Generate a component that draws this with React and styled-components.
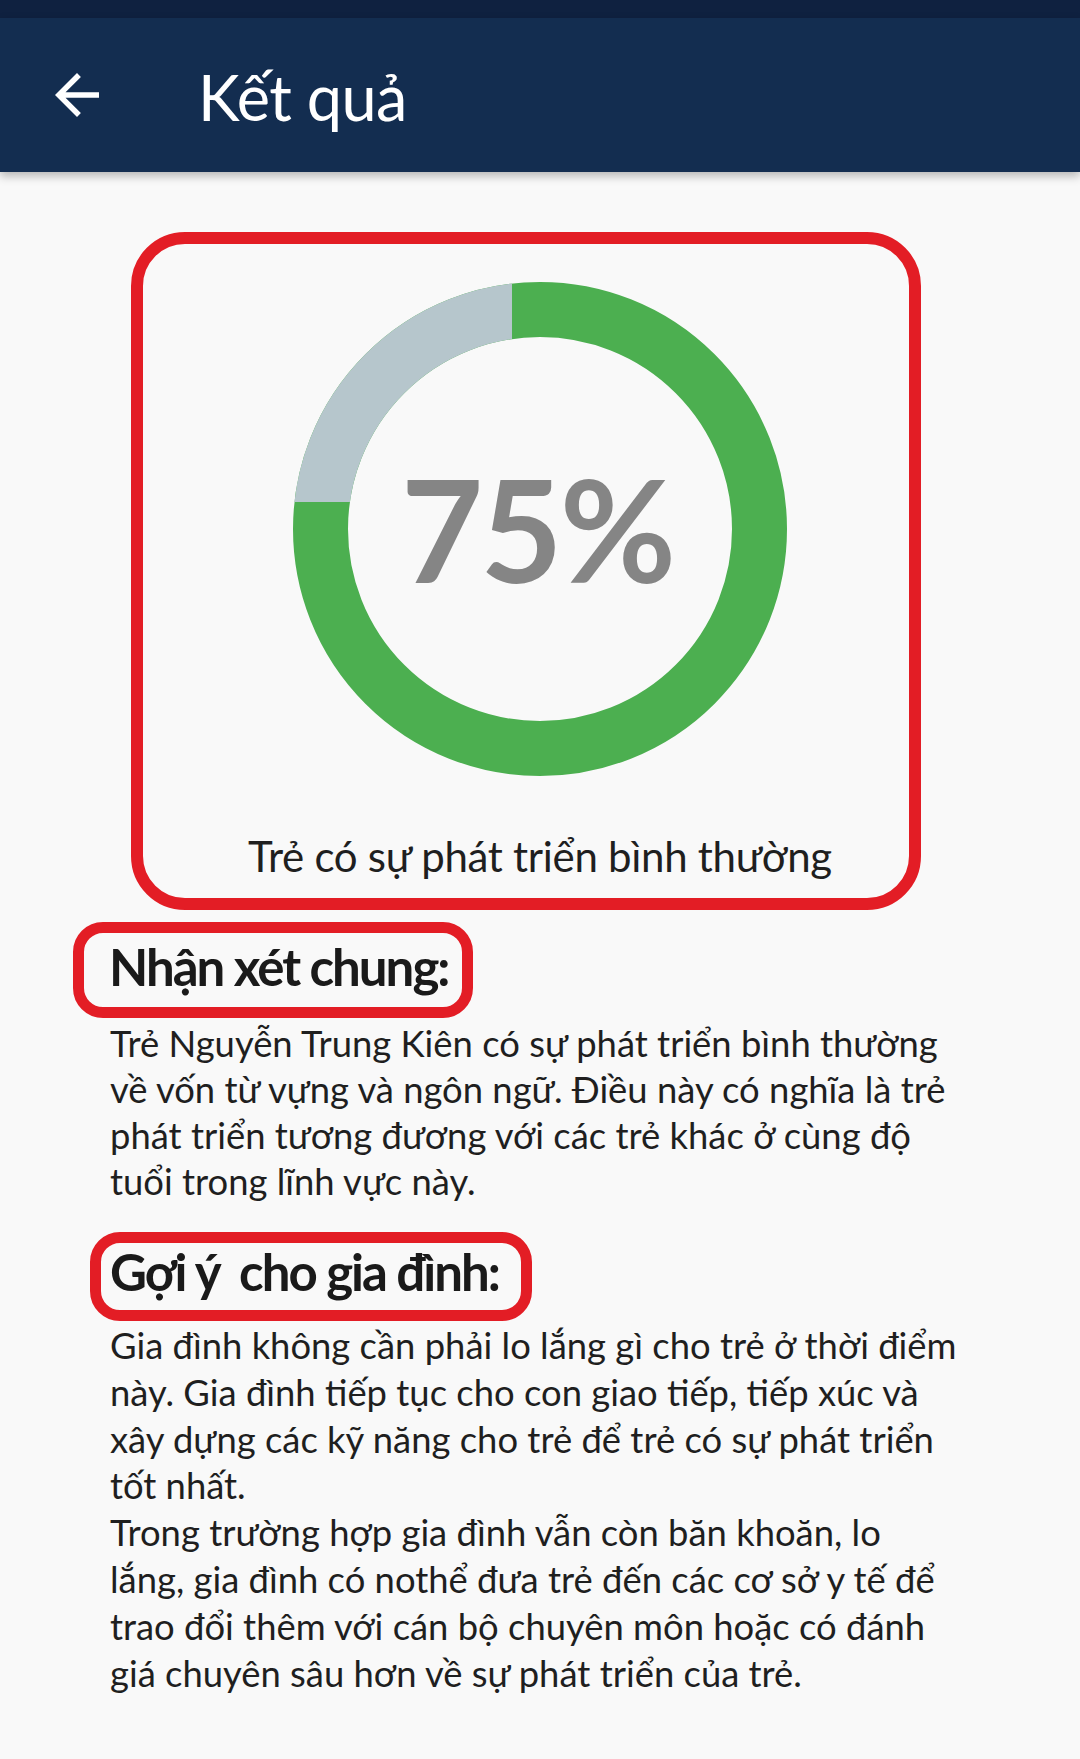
import React from 'react';
import styled, { createGlobalStyle } from 'styled-components';

const GlobalStyle = createGlobalStyle`
    html, body {
        margin: 0;
        padding: 0;
        background: #f9f9f9;
    }
    body {
        font-family: Lato, "Noto Sans", "Open Sans", sans-serif;
        color: #1f1f1f;
    }
`;

const Screen = styled.div`
    width: 1080px;
    min-height: 1759px;
    background: #f9f9f9;
    overflow: hidden;
`;

const StatusBar = styled.div`
    height: 18px;
    background: #0f2140;
`;

const TopBar = styled.header`
    height: 154px;
    background: #132d50;
    display: flex;
    align-items: center;
    padding-left: 44px;
    box-shadow: 0 4px 9px rgba(0, 0, 0, 0.28);
    position: relative;
    z-index: 1;

    svg {
        width: 66px;
        height: 66px;
        fill: #ffffff;
        flex-shrink: 0;
    }

    h1 {
        margin: 0 0 0 88px;
        font-size: 63px;
        font-weight: 400;
        color: #ffffff;
        letter-spacing: -0.6px;
        transform: translateY(1px);
    }
`;

const Content = styled.main`
    padding-top: 60px;
    padding-bottom: 40px;
`;

const ResultCard = styled.section`
    box-sizing: border-box;
    margin-left: 131px;
    width: 790px;
    height: 678px;
    border: 12px solid #e31d25;
    border-radius: 54px;
    padding: 38px 0 0 28px;
    display: flex;
    flex-direction: column;
    align-items: center;
`;

const Donut = styled.div`
    position: relative;
    width: 494px;
    height: 494px;

    svg {
        display: block;
    }
`;

const Percent = styled.span`
    position: absolute;
    inset: 0;
    display: flex;
    align-items: center;
    justify-content: center;
    font-size: 142px;
    font-weight: 700;
    color: #858585;
    letter-spacing: -3px;
    padding: 0 6px 2px 0;
`;

const Caption = styled.p`
    margin: 55px 0 0;
    font-size: 42px;
    line-height: 50px;
    color: #1f1f1f;
    letter-spacing: -0.3px;
`;

const HeadingBox = styled.div`
    box-sizing: border-box;
    margin: ${p => p.$top}px 0 0 ${p => p.$left}px;
    width: ${p => p.$width}px;
    height: ${p => p.$height}px;
    border: 11px solid #e31d25;
    border-radius: 30px;
    padding: ${p => p.$padTop}px 0 0 ${p => p.$padLeft}px;

    h2 {
        margin: 0;
        font-size: 51px;
        line-height: ${p => p.$lineHeight}px;
        font-weight: 700;
        letter-spacing: -2px;
        color: #1a1a1a;
        white-space: pre;
    }
`;

const Paragraph = styled.div`
    margin: ${p => p.$top}px 0 0 110px;
    font-size: 36.4px;
    line-height: ${p => p.$lineHeight}px;
    color: #1f1f1f;
`;

const Line = styled.span`
    display: block;
    white-space: nowrap;
`;

const R = 247;
const STROKE = 55;

const ProgressRing = ({ value }) => (
    <Donut>
        <svg width={R * 2} height={R * 2} viewBox={`0 0 ${R * 2} ${R * 2}`}>
            <defs>
                <clipPath id="rest-clip">
                    <rect x="0" y="0" width={R - 28} height={R - 27} />
                </clipPath>
            </defs>
            <circle cx={R} cy={R} r={R - STROKE / 2} fill="none" stroke="#4caf50" strokeWidth={STROKE} />
            <circle
                cx={R}
                cy={R}
                r={R - STROKE / 2}
                fill="none"
                stroke="#b6c6cc"
                strokeWidth={STROKE}
                clipPath="url(#rest-clip)"
            />
        </svg>
        <Percent>{value}%</Percent>
    </Donut>
);

const summary = [
    'Trẻ Nguyễn Trung Kiên có sự phát triển bình thường',
    'về vốn từ vựng và ngôn ngữ. Điều này có nghĩa là trẻ',
    'phát triển tương đương với các trẻ khác ở cùng độ',
    'tuổi trong lĩnh vực này.',
];

const advice = [
    'Gia đình không cần phải lo lắng gì cho trẻ ở thời điểm',
    'này. Gia đình tiếp tục cho con giao tiếp, tiếp xúc và',
    'xây dựng các kỹ năng cho trẻ để trẻ có sự phát triển',
    'tốt nhất.',
    'Trong trường hợp gia đình vẫn còn băn khoăn, lo',
    'lắng, gia đình có nothể đưa trẻ đến các cơ sở y tế để',
    'trao đổi thêm với cán bộ chuyên môn hoặc có đánh',
    'giá chuyên sâu hơn về sự phát triển của trẻ.',
];

const App = () => {
    return (
        <Screen>
            <GlobalStyle />
            <StatusBar />
            <TopBar>
                <svg viewBox="0 0 24 24">
                    <path d="M20 11H7.83l5.59-5.59L12 4l-8 8 8 8 1.41-1.41L7.83 13H20v-2z" />
                </svg>
                <h1>Kết quả</h1>
            </TopBar>
            <Content>
                <ResultCard>
                    <ProgressRing value={75} />
                    <Caption>Trẻ có sự phát triển bình thường</Caption>
                </ResultCard>

                <HeadingBox $top={12} $left={73} $width={400} $height={96} $padTop={2} $padLeft={25} $lineHeight={64}>
                    <h2>Nhận xét chung:</h2>
                </HeadingBox>
                <Paragraph $top={2} $lineHeight={46}>
                    {summary.map(l => <Line key={l}>{l}</Line>)}
                </Paragraph>

                <HeadingBox $top={28} $left={90} $width={442} $height={89} $padTop={0} $padLeft={9} $lineHeight={58}>
                    <h2>Gợi ý  cho gia đình:</h2>
                </HeadingBox>
                <Paragraph $top={1} $lineHeight={46.8}>
                    {advice.map(l => <Line key={l}>{l}</Line>)}
                </Paragraph>
            </Content>
        </Screen>
    );
};

export default App;
